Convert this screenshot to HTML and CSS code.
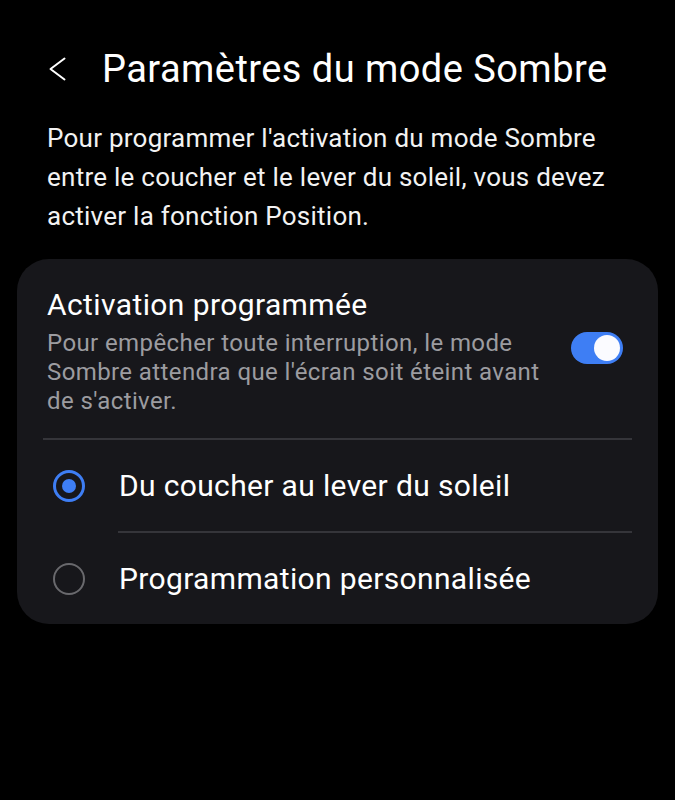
FILE: index.html
```html
<!DOCTYPE html>
<html lang="fr">
<head>
<meta charset="utf-8">
<title>Paramètres du mode Sombre</title>
<link rel="stylesheet" href="styles.css">
</head>
<body>
<div class="screen">
  <header class="appbar">
    <svg class="back" width="18" height="24" viewBox="0 0 18 24" aria-hidden="true">
      <polyline points="15.5,1.5 1.5,12 15.5,22.5" fill="none" stroke="#ffffff" stroke-width="2" stroke-linecap="round" stroke-linejoin="round"/>
    </svg>
    <h1 class="title">Paramètres du mode Sombre</h1>
  </header>

  <p class="intro">Pour programmer l'activation du mode Sombre entre le coucher et le lever du soleil, vous devez activer la fonction Position.</p>

  <section class="card">
    <div class="switch-row">
      <div class="switch-text">
        <div class="item-title">Activation programmée</div>
        <div class="item-sub">Pour empêcher toute interruption, le mode Sombre attendra que l'écran soit éteint avant de s'activer.</div>
      </div>
      <div class="toggle on"><span class="knob"></span></div>
    </div>
    <div class="divider"></div>
    <div class="radio-row">
      <span class="radio checked"><span class="dot"></span></span>
      <span class="radio-label">Du coucher au lever du soleil</span>
    </div>
    <div class="divider inset"></div>
    <div class="radio-row last">
      <span class="radio"></span>
      <span class="radio-label">Programmation personnalisée</span>
    </div>
  </section>
</div>
</body>
</html>
```
FILE: styles.css
```css
html, body {
  margin: 0;
  padding: 0;
  background: #000000;
}
body {
  font-family: Roboto, "Liberation Sans", sans-serif;
  color: #ffffff;
  width: 675px;
  height: 800px;
  overflow: hidden;
}
.screen {
  display: flex;
  flex-direction: column;
}
.appbar {
  display: flex;
  align-items: center;
  padding: 45px 0 0 49px;
  height: 48px;
}
.back {
  flex: 0 0 auto;
  display: block;
}
.title {
  margin: 0 0 0 35px;
  font-size: 38px;
  font-weight: 400;
  line-height: 48px;
  letter-spacing: 0.45px;
  white-space: nowrap;
}
.intro {
  margin: 26px 0 0 47px;
  width: 590px;
  font-size: 26px;
  line-height: 39px;
  color: #f2f2f2;
  letter-spacing: 0.25px;
}
.card {
  margin: 23px 17px 0 17px;
  background: #17171b;
  border-radius: 32px;
  padding: 28px 0 0 0;
  display: flex;
  flex-direction: column;
}
.switch-row {
  display: flex;
  align-items: center;
  padding: 0 35px 0 30px;
}
.switch-text {
  width: 505px;
}
.item-title {
  font-size: 30px;
  line-height: 36px;
  letter-spacing: 0.4px;
}
.item-sub {
  margin-top: 6px;
  font-size: 24px;
  line-height: 29px;
  color: #9c9ca0;
  letter-spacing: 0.4px;
}
.toggle {
  margin-left: auto;
  width: 52px;
  height: 32px;
  border-radius: 16px;
  background: #3e7ef4;
  display: flex;
  align-items: center;
  justify-content: flex-end;
  padding: 0 3px;
  box-sizing: border-box;
  margin-top: -8px;
}
.knob {
  width: 26px;
  height: 26px;
  border-radius: 50%;
  background: #fbfbff;
}
.divider {
  height: 2px;
  background: #35353a;
  margin: 22px 26px 0 26px;
}
.divider.inset {
  margin: 0 26px 0 101px;
}
.radio-row {
  display: flex;
  align-items: center;
  height: 91px;
  padding-left: 36px;
}
.radio-row.last {
  height: 91px;
}
.radio {
  width: 32px;
  height: 32px;
  box-sizing: border-box;
  border-radius: 50%;
  border: 2px solid #69696d;
  display: flex;
  align-items: center;
  justify-content: center;
  flex: 0 0 auto;
}
.radio.checked {
  border: 3px solid #3e7ef4;
}
.dot {
  width: 14px;
  height: 14px;
  border-radius: 50%;
  background: #3e7ef4;
}
.radio-label {
  margin-left: 34px;
  font-size: 30px;
  letter-spacing: 0.35px;
  white-space: nowrap;
}
```
